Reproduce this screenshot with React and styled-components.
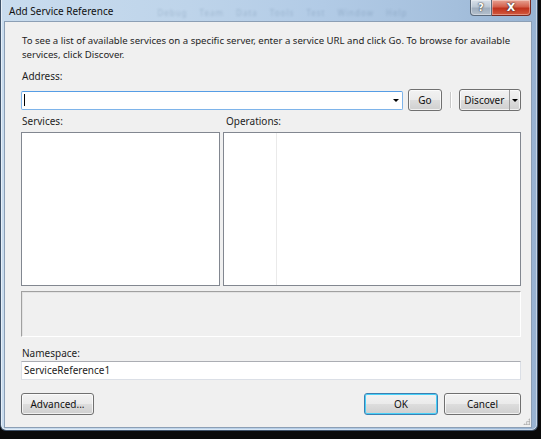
import React from "react";
import styled, { createGlobalStyle } from "styled-components";

const GlobalStyle = createGlobalStyle`
  html, body {
    margin: 0;
    padding: 0;
    background: #0a0a0a;
  }
  body {
    width: 541px;
    height: 439px;
    overflow: hidden;
    font-family: "Noto Sans", "Open Sans", sans-serif;
    font-size: 10px;
    color: #1e1e1e;
  }
`;

/* Aero glass frame */
const Window = styled.div`
  width: 538px;
  height: 431px;
  box-sizing: border-box;
  display: flex;
  flex-direction: column;
  padding: 0 5px 2px 3px;
  border: 1px solid #3f5269;
  border-top: none;
  border-radius: 0 0 6px 6px;
  background: linear-gradient(
    90deg,
    #c9dcee 0%,
    #bed4ea 35%,
    #b2cbe6 60%,
    #a4bfdc 85%,
    #98b3d2 100%
  );
  box-shadow: inset 1px 0 0 rgba(255, 255, 255, 0.55),
    inset -1px 0 0 rgba(255, 255, 255, 0.45),
    inset 0 -1px 0 rgba(255, 255, 255, 0.45);
`;

const TitleBar = styled.div`
  height: 21px;
  display: flex;
  align-items: flex-start;
`;

const Title = styled.span`
  padding: 4px 0 0 5px;
  font-size: 10px;
  color: #111;
  white-space: nowrap;
`;

const GhostMenu = styled.span`
  padding: 7px 0 0 44px;
  font-size: 8px;
  letter-spacing: 1px;
  word-spacing: 9px;
  color: #2b4a6b;
  opacity: 0.2;
  filter: blur(0.8px);
  white-space: nowrap;
`;

const Spacer = styled.div`
  flex: 1;
`;

const Caption = styled.div`
  display: flex;
  margin-right: 1px;
`;

const CaptionButton = styled.div`
  height: 16px;
  width: ${(p) => p.$w}px;
  box-sizing: border-box;
  display: flex;
  align-items: center;
  justify-content: center;
  border: 1px solid ${(p) => (p.$close ? "#7a2b22" : "#5c6a7b")};
  border-top: none;
  border-left: ${(p) => (p.$close ? "none" : undefined)};
  border-radius: ${(p) => (p.$close ? "0 0 4px 0" : "0 0 0 4px")};
  background: ${(p) =>
    p.$close
      ? "linear-gradient(180deg, #e7a394 0%, #d4604c 45%, #c0321d 55%, #d45a3e 100%)"
      : "linear-gradient(180deg, #d9e1ea 0%, #bcc8d5 45%, #a0aebe 55%, #b4c0cd 100%)"};
  box-shadow: inset 0 0 0 1px rgba(255, 255, 255, 0.35);
  color: #fff;
  font-family: "DejaVu Sans", sans-serif;
  font-weight: bold;
  font-size: ${(p) => (p.$close ? 11 : 10)}px;
  text-shadow: 0 0 1px #333, 0 0 2px #333;
`;

const Client = styled.div`
  flex: 1;
  display: flex;
  flex-direction: column;
  background: #f0f0f0;
  border: 1px solid #8c9fb5;
  padding: 0 10px 0 16px;
`;

const Description = styled.p`
  margin: 12px 0 0 1px;
  font-size: 9.6px;
  line-height: 14px;
  white-space: nowrap;
`;

const Label = styled.div`
  margin-top: ${(p) => p.$mt || 0}px;
  margin-left: ${(p) => p.$ml || 1}px;
  height: 13px;
  line-height: 13px;
  white-space: nowrap;
`;

const Row = styled.div`
  display: flex;
  align-items: center;
  margin-top: ${(p) => p.$mt || 0}px;
`;

const Combo = styled.div`
  flex: 0 0 382px;
  height: 19px;
  box-sizing: border-box;
  display: flex;
  align-items: center;
  justify-content: space-between;
  background: #fff;
  border: 1px solid #7eb4ea;
  border-top-color: #569de5;
  border-radius: 2px;
  padding: 0 3px 0 2px;
`;

const Caret = styled.span`
  width: 1px;
  height: 12px;
  background: #000;
`;

const Arrow = styled.span`
  width: 0;
  height: 0;
  border-left: 3px solid transparent;
  border-right: 3px solid transparent;
  border-top: 3px solid #000;
`;

const Button = styled.div`
  width: ${(p) => p.$w}px;
  height: ${(p) => p.$h || 22}px;
  box-sizing: border-box;
  display: flex;
  align-items: center;
  justify-content: center;
  margin-left: ${(p) => p.$ml || 0}px;
  border: 1px solid ${(p) => (p.$default ? "#3c7fb1" : "#707070")};
  border-radius: 3px;
  background: linear-gradient(180deg, #f2f2f2 0%, #ebebeb 48%, #dddddd 52%, #cfcfcf 100%);
  box-shadow: inset 0 0 0 1px ${(p) => (p.$default ? "#48d0f8" : "rgba(255,255,255,0.7)")};
  color: #111;
  white-space: nowrap;
`;

const Separator = styled.div`
  width: 1px;
  height: 16px;
  margin-left: 8px;
  background: #c8c8c8;
  box-shadow: 1px 0 0 #fff;
`;

const SplitButton = styled(Button)`
  justify-content: flex-start;
  padding: 0;
`;

const SplitMain = styled.span`
  flex: 1;
  text-align: center;
  border-right: 1px solid #9a9a9a;
  line-height: 20px;
`;

const SplitArrow = styled.span`
  width: 10px;
  display: flex;
  justify-content: center;
`;

const Columns = styled.div`
  display: grid;
  grid-template-columns: 199px 298px;
  column-gap: 3px;
  margin-top: ${(p) => p.$mt || 0}px;
`;

const ListBox = styled.div`
  height: 154px;
  box-sizing: border-box;
  background: #fff;
  border: 1px solid #828790;
  display: flex;
`;

const IconColumn = styled.div`
  width: 52px;
  border-right: 1px solid #eaeaea;
`;

const StatusPanel = styled.div`
  height: 46px;
  width: 500px;
  box-sizing: border-box;
  margin-top: 5px;
  border: 1px solid #fff;
  border-top-color: #a0a0a0;
  border-left-color: #a0a0a0;
  box-shadow: inset 1px 1px 0 #e3e3e3;
  background: #f0f0f0;
`;

const TextField = styled.div`
  width: 500px;
  height: 19px;
  box-sizing: border-box;
  margin-top: 1px;
  background: #fff;
  border: 1px solid #dbdfe6;
  border-top-color: #abadb3;
  padding-left: 2px;
  line-height: 17px;
`;

const ButtonRow = styled.div`
  display: flex;
  width: 500px;
  margin-top: 13px;
`;

const Grip = styled.div`
  align-self: flex-end;
  margin: auto -9px 2px 0;
  width: 7px;
  height: 7px;
  background-image: radial-gradient(circle, #a8a8a8 0.8px, transparent 1.1px);
  background-size: 2.5px 2.5px;
  clip-path: polygon(100% 0, 100% 100%, 0 100%);
`;

export default function App() {
  return (
    <>
      <GlobalStyle />
      <Window>
        <TitleBar>
          <Title>Add Service Reference</Title>
          <GhostMenu>Debug Team Data Tools Test Window Help</GhostMenu>
          <Spacer />
          <Caption>
            <CaptionButton $w={22}>?</CaptionButton>
            <CaptionButton $w={39} $close>
              X
            </CaptionButton>
          </Caption>
        </TitleBar>
        <Client>
          <Description>
            To see a list of available services on a specific server, enter a service URL and click Go. To browse for available
            <br />
            services, click Discover.
          </Description>
          <Label $mt={8}>Address:</Label>
          <Row $mt={6}>
            <Combo>
              <Caret />
              <Arrow />
            </Combo>
            <Button $w={34} $ml={5}>
              Go
            </Button>
            <Separator />
            <SplitButton $w={63} $ml={8}>
              <SplitMain>Discover</SplitMain>
              <SplitArrow>
                <Arrow />
              </SplitArrow>
            </SplitButton>
          </Row>
          <Columns $mt={4}>
            <Label>Services:</Label>
            <Label $ml={3}>Operations:</Label>
          </Columns>
          <Columns $mt={4}>
            <ListBox />
            <ListBox>
              <IconColumn />
            </ListBox>
          </Columns>
          <StatusPanel />
          <Label $mt={10}>Namespace:</Label>
          <TextField>ServiceReference1</TextField>
          <ButtonRow>
            <Button $w={73}>Advanced...</Button>
            <Spacer />
            <Button $w={74} $default>
              OK
            </Button>
            <Button $w={77} $ml={6}>
              Cancel
            </Button>
          </ButtonRow>
          <Grip />
        </Client>
      </Window>
    </>
  );
}
